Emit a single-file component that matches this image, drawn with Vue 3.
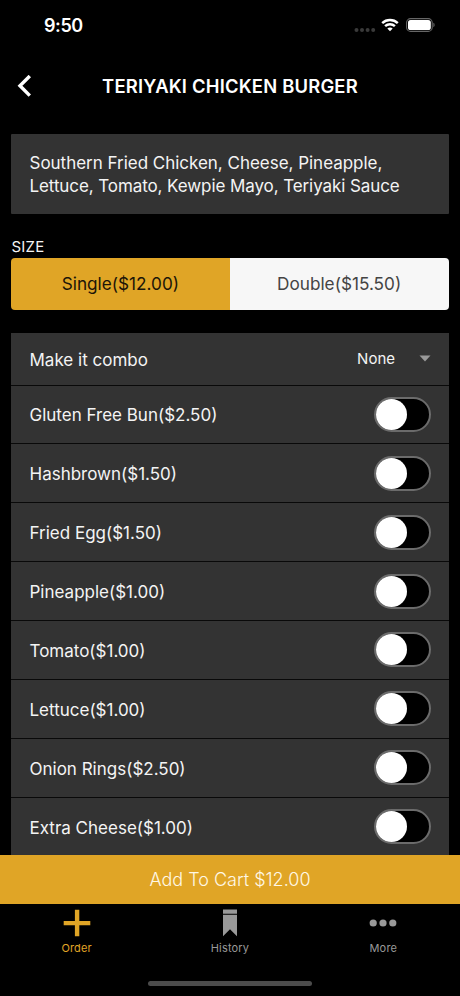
<script setup>
import { ref } from 'vue'

const sizes = [
  { name: 'Single', price: 12 },
  { name: 'Double', price: 15.5 },
]
const selected = ref(0)

const extras = ref([
  { name: 'Gluten Free Bun', price: 2.5, on: false },
  { name: 'Hashbrown', price: 1.5, on: false },
  { name: 'Fried Egg', price: 1.5, on: false },
  { name: 'Pineapple', price: 1, on: false },
  { name: 'Tomato', price: 1, on: false },
  { name: 'Lettuce', price: 1, on: false },
  { name: 'Onion Rings', price: 2.5, on: false },
  { name: 'Extra Cheese', price: 1, on: false },
])

const money = (n) => '$' + n.toFixed(2)

const total = () =>
  extras.value.reduce((sum, e) => sum + (e.on ? e.price : 0), sizes[selected.value].price)
</script>

<template>
  <div class="screen">
    <div class="status">
      <span class="time">9:50</span>
      <div class="status-icons">
        <svg class="signal" width="22" height="6" viewBox="0 0 22 6">
          <circle cx="2.5" cy="3" r="2" />
          <circle cx="8" cy="3" r="2" />
          <circle cx="13.6" cy="3" r="2" />
          <circle cx="19.2" cy="3" r="2" />
        </svg>
        <svg class="wifi" width="18" height="14" viewBox="0 0 18 14">
          <path d="M1.2 5.1C5.6 1 12.4 1 16.8 5.1" />
          <path d="M4.1 8.1C6.9 5.5 11.1 5.5 13.9 8.1" />
          <path class="dot" d="M6.3 10.4C7.8 9.1 10.2 9.1 11.7 10.4L9 13.2Z" />
        </svg>
        <svg class="battery" width="30" height="14" viewBox="0 0 30 14">
          <rect class="shell" x="0.6" y="0.6" width="25.6" height="12.8" rx="4" />
          <rect class="charge" x="2" y="2" width="22.8" height="10" rx="2.6" />
          <path class="cap" d="M27.4 4.8C29 5.4 29 8.6 27.4 9.2Z" />
        </svg>
      </div>
    </div>

    <header class="nav">
      <svg class="back" width="14" height="22" viewBox="0 0 14 22">
        <path d="M12.8 1L3 10.8L12.8 20.6" />
      </svg>
      <h1>TERIYAKI CHICKEN BURGER</h1>
    </header>

    <main class="content">
      <p class="description">
        Southern Fried Chicken, Cheese, Pineapple,<br />
        <span class="line-two">Lettuce, Tomato, Kewpie Mayo, Teriyaki Sauce</span>
      </p>

      <p class="label">SIZE</p>
      <div class="sizes">
        <button
          v-for="(s, i) in sizes"
          :key="s.name"
          class="size"
          :class="{ active: selected === i }"
          @click="selected = i"
        >{{ s.name }}({{ money(s.price) }})</button>
      </div>

      <div class="options">
        <div class="row combo">
          <span class="name">Make it combo</span>
          <span class="select">
            None
            <svg width="12" height="7" viewBox="0 0 12 7"><path d="M0.5 0.4H11.5L6 6.4Z" /></svg>
          </span>
        </div>
        <div v-for="e in extras" :key="e.name" class="row">
          <span class="name">{{ e.name }}({{ money(e.price) }})</span>
          <button class="toggle" :class="{ on: e.on }" @click="e.on = !e.on">
            <span class="knob"></span>
          </button>
        </div>
      </div>
    </main>

    <button class="cart">Add To Cart {{ money(total()) }}</button>

    <nav class="tabs">
      <div class="tab active">
        <svg width="28" height="28" viewBox="0 0 28 28">
          <path d="M11.9 0.7H16.3V11.9H27.3V16.3H16.3V27.3H11.9V16.3H0.7V11.9H11.9Z" />
        </svg>
        <span>Order</span>
      </div>
      <div class="tab">
        <svg width="28" height="28" viewBox="0 0 28 28">
          <path d="M7 0.6H21V4.7H7ZM7 5.7H21V27.2L14 20.2L7 27.2Z" />
        </svg>
        <span>History</span>
      </div>
      <div class="tab">
        <svg width="28" height="28" viewBox="0 0 28 28">
          <circle cx="4.2" cy="14" r="3.6" />
          <circle cx="14" cy="14" r="3.6" />
          <circle cx="23.8" cy="14" r="3.6" />
        </svg>
        <span>More</span>
      </div>
    </nav>
    <div class="home"><span></span></div>
  </div>
</template>

<style>
body {
  background: #000;
}
</style>

<style scoped>
.screen {
  width: 460px;
  height: 996px;
  background: #000;
  color: #f4f4f4;
  font-family: Inter, "Liberation Sans", sans-serif;
  display: flex;
  flex-direction: column;
  overflow: hidden;
}

button {
  border: 0;
  padding: 0;
  margin: 0;
  font: inherit;
  letter-spacing: inherit;
}

svg {
  display: block;
}

.status {
  height: 50px;
  flex: none;
  display: flex;
  align-items: center;
  justify-content: space-between;
  padding: 0 24px 0 44px;
}

.time {
  font-size: 18px;
  font-weight: 600;
  letter-spacing: -0.4px;
  padding-top: 1px;
  color: #fff;
}

.status-icons {
  display: flex;
  align-items: center;
}

.signal {
  fill: #3a3a3a;
  margin: 10px 5px 0 0;
}

.wifi {
  margin-right: 7px;
}

.wifi path {
  fill: none;
  stroke: #fff;
  stroke-width: 2.5;
}

.wifi .dot {
  fill: #fff;
  stroke: none;
}

.shell {
  fill: none;
  stroke: #666;
  stroke-width: 1.1;
}

.charge {
  fill: #fff;
}

.cap {
  fill: #666;
}

.nav {
  height: 84px;
  flex: none;
  display: grid;
  grid-template-columns: 60px 1fr 60px;
  align-items: center;
  padding-bottom: 12px;
  box-sizing: border-box;
}

.back {
  margin-left: 17px;
  fill: none;
  stroke: #fff;
  stroke-width: 3.4;
}

h1 {
  margin: 0;
  font-size: 18.4px;
  font-weight: 600;
  letter-spacing: 0.2px;
  text-align: center;
  white-space: nowrap;
  color: #fff;
}

.content {
  flex: 1;
  min-height: 0;
  overflow: hidden;
  padding: 0 11.5px 0 11px;
}

.description {
  margin: 0;
  height: 80px;
  box-sizing: border-box;
  padding: 18px 18px 18px 18.5px;
  background: #333;
  border-radius: 1px;
  font-size: 17px;
  line-height: 23px;
  letter-spacing: -0.02px;
  white-space: nowrap;
}

.line-two {
  letter-spacing: -0.09px;
}

.label {
  margin: 24px 0 2px 0.5px;
  font-size: 15px;
  line-height: 18px;
  letter-spacing: 0.2px;
}

.sizes {
  display: grid;
  grid-template-columns: 1fr 1fr;
  height: 52px;
  border-radius: 4px;
  overflow: hidden;
}

.size {
  background: #f7f7f7;
  color: #444;
  font-size: 17.2px;
  padding-bottom: 2px;
}

.size.active {
  background: #e0a526;
  color: #1c1508;
}

.options {
  margin-top: 22.5px;
}

.row {
  display: flex;
  align-items: center;
  justify-content: space-between;
  height: 58.88px;
  box-sizing: border-box;
  padding: 0 18px 0 18.5px;
  background: #333;
  border-bottom: 1px solid #090909;
  font-size: 17px;
}

.name {
  padding-top: 2px;
}

.combo {
  height: 53px;
}

.select {
  display: flex;
  align-items: center;
  gap: 23.5px;
  font-size: 15px;
}

.select svg {
  fill: #999;
}

.toggle {
  width: 57px;
  height: 35px;
  box-sizing: border-box;
  border: 2px solid #6b6b6b;
  border-radius: 18px;
  background: #000;
  display: flex;
  align-items: center;
}

.toggle.on {
  background: #e0a526;
  justify-content: flex-end;
}

.knob {
  width: 31px;
  height: 31px;
  border-radius: 50%;
  background: #fff;
}

.cart {
  flex: none;
  height: 49px;
  background: #e0a526;
  color: #fff8e6;
  font-size: 18px;
  font-weight: 300;
  padding-top: 1px;
}

.tabs {
  flex: none;
  height: 65.5px;
  display: grid;
  grid-template-columns: repeat(3, 1fr);
}

.tab {
  display: flex;
  flex-direction: column;
  align-items: center;
  padding-top: 5.5px;
  font-size: 11px;
  line-height: 14px;
  letter-spacing: 0.18px;
  gap: 4px;
  color: #999;
}

.tab svg {
  fill: currentColor;
}

.tab.active {
  color: #e0a526;
}

.home {
  flex: none;
  height: 27px;
  display: flex;
  justify-content: center;
}

.home span {
  width: 164px;
  height: 5px;
  margin-top: 12px;
  border-radius: 3px;
  background: #4b4b4b;
}
</style>
